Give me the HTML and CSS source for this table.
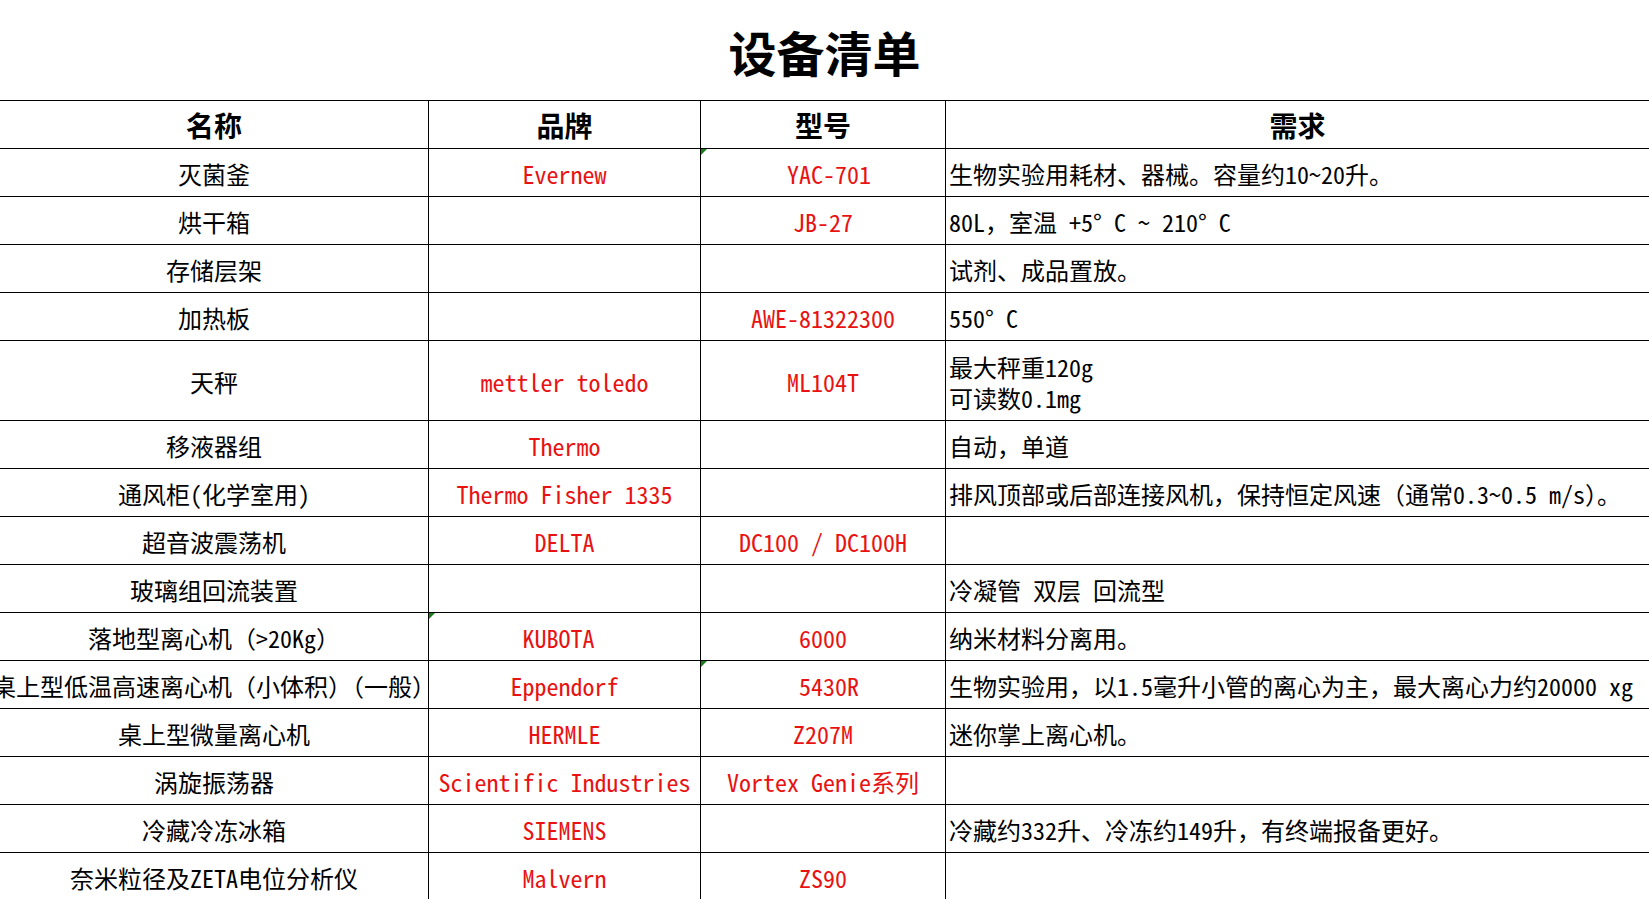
FILE: index.html
```html
<!DOCTYPE html>
<html lang="zh-CN">
<head>
<meta charset="utf-8">
<title>设备清单</title>
<link rel="stylesheet" href="styles.css">
</head>
<body>
<div class="title">设备清单</div>
<div class="sheet">
  <div class="row head">
    <div class="c">名称</div>
    <div class="c">品牌</div>
    <div class="c">型号</div>
    <div class="c need">需求</div>
  </div>
  <div class="row">
    <div class="c">灭菌釜</div>
    <div class="c red">Evernew</div>
    <div class="c red"><span class="flag"></span> YAC-701</div>
    <div class="c need">生物实验用耗材、器械。容量约10~20升。</div>
  </div>
  <div class="row">
    <div class="c">烘干箱</div>
    <div class="c red"></div>
    <div class="c red">JB-27</div>
    <div class="c need">80L，室温 +5° C ~ 210° C</div>
  </div>
  <div class="row">
    <div class="c">存储层架</div>
    <div class="c red"></div>
    <div class="c red"></div>
    <div class="c need">试剂、成品置放。</div>
  </div>
  <div class="row">
    <div class="c">加热板</div>
    <div class="c red"></div>
    <div class="c red">AWE-81322300</div>
    <div class="c need">550° C</div>
  </div>
  <div class="row tall">
    <div class="c">天秤</div>
    <div class="c red">mettler toledo</div>
    <div class="c red">ML104T</div>
    <div class="c need"><div class="lines"><div class="ln">最大秤重120g</div><div class="ln">可读数0.1mg</div></div></div>
  </div>
  <div class="row">
    <div class="c">移液器组</div>
    <div class="c red">Thermo</div>
    <div class="c red"></div>
    <div class="c need">自动，单道</div>
  </div>
  <div class="row">
    <div class="c">通风柜(化学室用)</div>
    <div class="c red">Thermo Fisher 1335</div>
    <div class="c red"></div>
    <div class="c need">排风顶部或后部连接风机，保持恒定风速（通常0.3~0.5 m/s）。</div>
  </div>
  <div class="row">
    <div class="c">超音波震荡机</div>
    <div class="c red">DELTA</div>
    <div class="c red">DC100 / DC100H</div>
    <div class="c need"></div>
  </div>
  <div class="row">
    <div class="c">玻璃组回流装置</div>
    <div class="c red"></div>
    <div class="c red"></div>
    <div class="c need">冷凝管 双层 回流型</div>
  </div>
  <div class="row">
    <div class="c">落地型离心机（&gt;20Kg）</div>
    <div class="c red"><span class="flag"></span>KUBOTA </div>
    <div class="c red">6000</div>
    <div class="c need">纳米材料分离用。</div>
  </div>
  <div class="row">
    <div class="c">桌上型低温高速离心机（小体积）（一般）</div>
    <div class="c red">Eppendorf</div>
    <div class="c red"><span class="flag"></span> 5430R</div>
    <div class="c need">生物实验用，以1.5毫升小管的离心为主，最大离心力约20000 xg</div>
  </div>
  <div class="row">
    <div class="c">桌上型微量离心机</div>
    <div class="c red">HERMLE</div>
    <div class="c red">Z207M</div>
    <div class="c need">迷你掌上离心机。</div>
  </div>
  <div class="row">
    <div class="c">涡旋振荡器</div>
    <div class="c red">Scientific Industries</div>
    <div class="c red">Vortex Genie系列</div>
    <div class="c need"></div>
  </div>
  <div class="row">
    <div class="c">冷藏冷冻冰箱</div>
    <div class="c red">SIEMENS</div>
    <div class="c red"></div>
    <div class="c need">冷藏约332升、冷冻约149升，有终端报备更好。</div>
  </div>
  <div class="row">
    <div class="c">奈米粒径及ZETA电位分析仪</div>
    <div class="c red">Malvern</div>
    <div class="c red">ZS90</div>
    <div class="c need"></div>
  </div>
</div>
</body>
</html>
```
FILE: styles.css
```css
html, body {
  margin: 0;
  padding: 0;
  background: #ffffff;
  overflow: hidden;
}

body {
  width: 1649px;
  height: 899px;
  color: #000000;
  font-family: "Noto Sans Mono CJK SC", "Noto Sans CJK SC", monospace;
}

.title {
  height: 100px;
  display: flex;
  align-items: center;
  justify-content: center;
  font-family: "Noto Sans CJK SC", sans-serif;
  font-size: 48px;
  font-weight: 700;
  padding-top: 2px;
  box-sizing: border-box;
}

.sheet {
  border-top: 1px solid #000000;
  width: 1649px;
}

.row {
  display: grid;
  grid-template-columns: 429px 272px 245px 703px;
  height: 48px;
}

.row.tall {
  height: 80px;
}

.c {
  position: relative;
  box-sizing: border-box;
  border-right: 1px solid #000000;
  border-bottom: 1px solid #000000;
  display: flex;
  align-items: center;
  justify-content: center;
  white-space: pre;
  font-size: 24px;
  line-height: 30px;
  padding-top: 3px;
}

.head .c {
  font-size: 28px;
  font-weight: 700;
  padding-top: 1px;
}

.c.need {
  border-right: none;
  justify-content: flex-start;
  padding-left: 3px;
}

.head .c.need {
  justify-content: center;
  padding-left: 0;
}

.red {
  color: #e81212;
}

.lines {
  display: flex;
  flex-direction: column;
  gap: 0;
}

.ln {
  height: 31px;
  line-height: 31px;
}

.flag {
  position: absolute;
  left: 0;
  top: 0;
  width: 0;
  height: 0;
  border-top: 6px solid #1e7b1e;
  border-right: 6px solid transparent;
}
```
